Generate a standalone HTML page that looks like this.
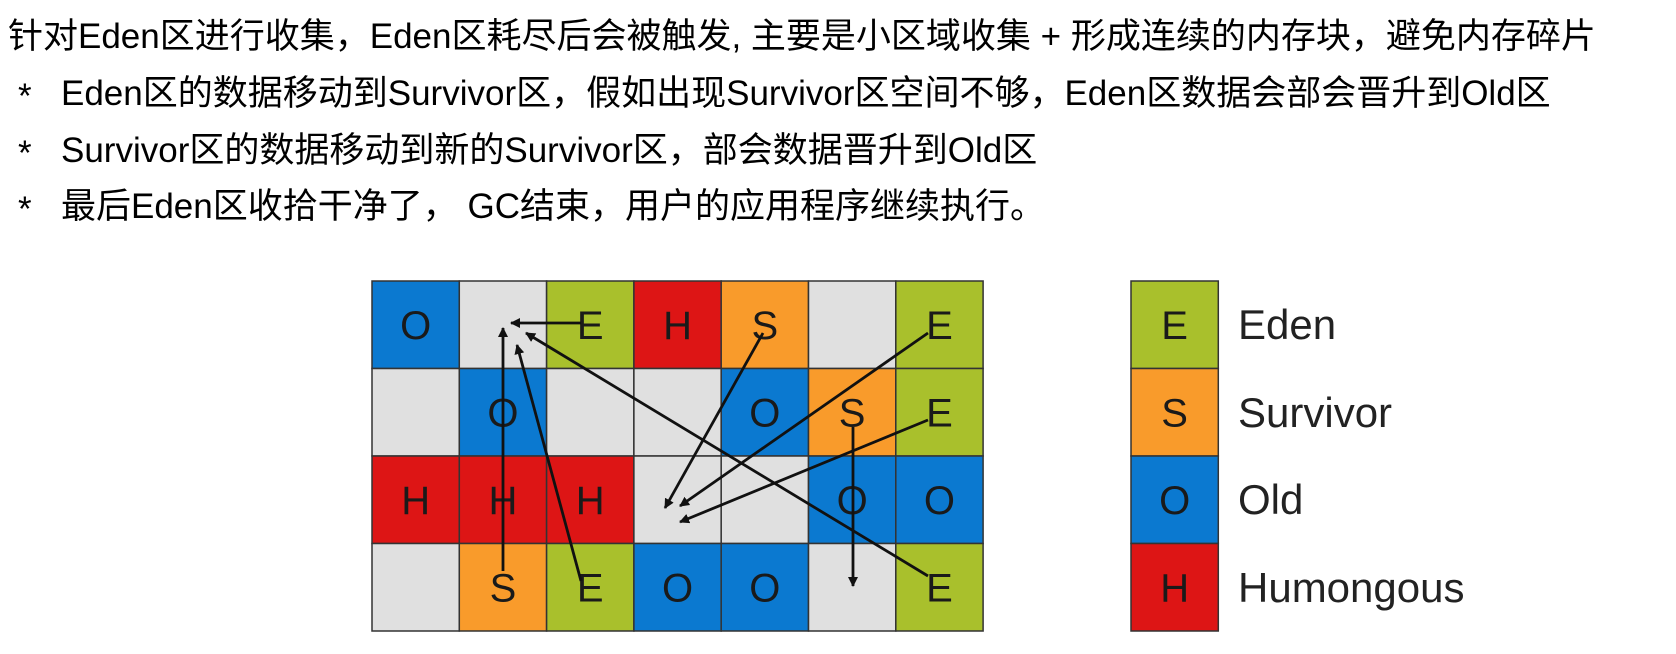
<!DOCTYPE html>
<html><head><meta charset="utf-8"><style>
body{margin:0;width:1676px;height:654px;background:#fff;position:relative;overflow:hidden;font-family:"Liberation Sans","Noto Sans CJK SC",sans-serif;color:#000}
.t{position:absolute;font-size:35px;white-space:nowrap;line-height:40px}
</style></head><body>
<div class="t" style="left:8px;top:17px">针对Eden区进行收集，Eden区耗尽后会被触发, 主要是小区域收集 + 形成连续的内存块，避免内存碎片</div>
<div class="t" style="left:18px;top:77px">*</div><div class="t" style="left:61px;top:74px">Eden区的数据移动到Survivor区，假如出现Survivor区空间不够，Eden区数据会部会晋升到Old区</div>
<div class="t" style="left:18px;top:134px">*</div><div class="t" style="left:61px;top:131px">Survivor区的数据移动到新的Survivor区，部会数据晋升到Old区</div>
<div class="t" style="left:18px;top:190px">*</div><div class="t" style="left:61px;top:187px">最后Eden区收拾干净了， GC结束，用户的应用程序继续执行。</div>
<svg width="1676" height="654" style="position:absolute;left:0;top:0" font-family="Liberation Sans, sans-serif">
<defs><marker id="a" markerWidth="12" markerHeight="12" refX="9" refY="5" orient="auto" markerUnits="userSpaceOnUse"><path d="M0,0 L10,5 L0,10 z" fill="#111"/></marker></defs>
<g id="g" stroke="#333" stroke-width="1.5"></g>
<script>
var C={E:'#a9c02c',S:'#f99b2b',O:'#0b79d0',H:'#dd1515',_:'#e0e0e0'};
var rows=["O_EHS_E","_O__OSE","HHH__OO","_SEOO_E"];
var g=document.getElementById('g'),ns='http://www.w3.org/2000/svg',w=87.3,h=87.5;
function rect(x,y,k){var r=document.createElementNS(ns,'rect');r.setAttribute('x',x);r.setAttribute('y',y);r.setAttribute('width',w);r.setAttribute('height',h);r.setAttribute('fill',C[k]);g.appendChild(r);
if(k!='_'){var t=document.createElementNS(ns,'text');t.setAttribute('x',x+w/2);t.setAttribute('y',y+h/2+14);t.setAttribute('text-anchor','middle');t.setAttribute('font-size','40');t.setAttribute('fill','#1a1a1a');t.setAttribute('stroke','none');t.textContent=k;g.appendChild(t);}}
for(var r=0;r<4;r++)for(var c=0;c<7;c++)rect(372+c*w,281+r*h,rows[r][c]);
['E','S','O','H'].forEach(function(k,i){rect(1131,281+i*h,k);});
</script>
<g stroke="#111" stroke-width="2.8" marker-end="url(#a)">
<line x1="581" y1="323" x2="511" y2="323"/>
<line x1="503" y1="571" x2="503" y2="328"/>
<line x1="581" y1="581" x2="517" y2="345"/>
<line x1="928" y1="576" x2="526" y2="333"/>
<line x1="763" y1="333" x2="665" y2="508"/>
<line x1="928" y1="333" x2="680" y2="506"/>
<line x1="928" y1="420" x2="680" y2="522"/>
<line x1="853" y1="427" x2="853" y2="586"/>
</g>
<g font-size="42" fill="#222">
<text x="1238" y="339">Eden</text>
<text x="1238" y="427">Survivor</text>
<text x="1238" y="514">Old</text>
<text x="1238" y="602">Humongous</text>
</g>
</svg>
</body></html>
